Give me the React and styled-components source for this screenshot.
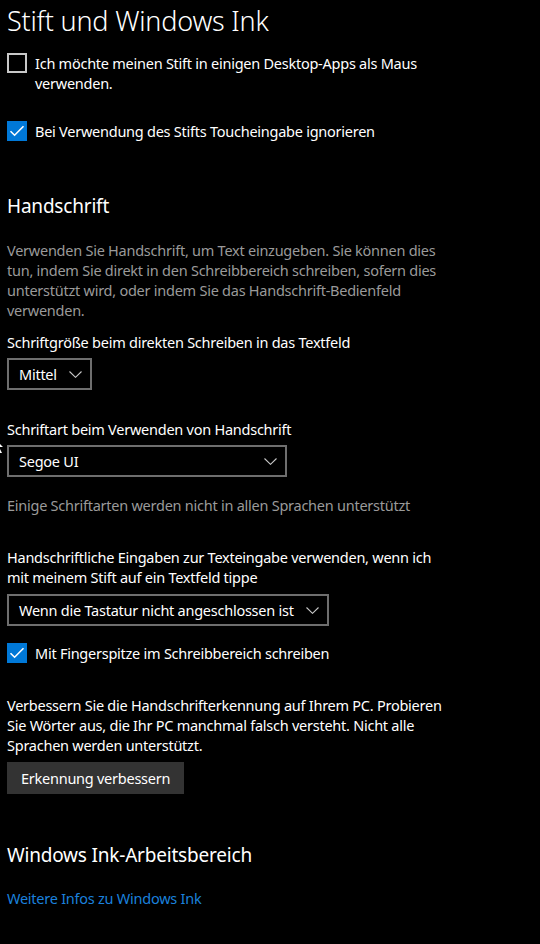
import React from "react";
import styled, { createGlobalStyle } from "styled-components";

const Global = createGlobalStyle`
  html, body { margin: 0; padding: 0; background: #000; }
  body { font-family: "Noto Sans", "Open Sans", sans-serif; color: #fff; }
  * { box-sizing: border-box; }
`;

const Page = styled.div`
  position: relative;
  width: 540px;
  min-height: 944px;
  background: #000;
  padding: 0 0 36px 7px;
  display: flex;
  flex-direction: column;
  align-items: flex-start;
`;

const Title = styled.h1`
  margin: 0;
  margin-top: ${(p) => p.$top}px;
  font-size: 27px;
  line-height: 36px;
  font-weight: 300;
  letter-spacing: -0.2px;
`;

const Heading = styled.h2`
  margin: 0;
  margin-top: ${(p) => p.$top}px;
  font-size: 19px;
  line-height: 28px;
  font-weight: 400;
  letter-spacing: -0.2px;
`;

const Text = styled.p`
  margin: 0;
  margin-top: ${(p) => p.$top}px;
  font-size: 14.5px;
  line-height: 20px;
  color: ${(p) => (p.$muted ? "#9a9a9a" : "#fff")};
  max-width: ${(p) => p.$max || 440}px;
  letter-spacing: -0.25px;
`;

const CheckRow = styled.label`
  display: flex;
  align-items: flex-start;
  gap: 8px;
  margin-top: ${(p) => p.$top}px;
  font-size: 14.5px;
  line-height: 20px;
  letter-spacing: -0.25px;
  max-width: 440px;
`;

const Box = styled.span`
  flex: none;
  width: 20px;
  height: 20px;
  display: flex;
  align-items: center;
  justify-content: center;
  background: ${(p) => (p.$checked ? "#0078d7" : "transparent")};
  border: ${(p) => (p.$checked ? "none" : "2px solid #c8c8c8")};
`;

const Dropdown = styled.div`
  display: flex;
  align-items: center;
  justify-content: space-between;
  gap: 12px;
  margin-top: ${(p) => p.$top}px;
  width: ${(p) => (p.$width ? `${p.$width}px` : "auto")};
  height: 32px;
  padding: 0 8px 0 10px;
  border: 2px solid #6e6e6e;
  font-size: 14.5px;
  letter-spacing: -0.25px;
  color: #fff;
`;

const Button = styled.button`
  margin-top: ${(p) => p.$top}px;
  height: 32px;
  padding: 0 14px;
  background: #333;
  border: none;
  color: #fff;
  font-family: inherit;
  font-size: 14.5px;
  letter-spacing: -0.25px;
`;

const Link = styled.a`
  margin-top: ${(p) => p.$top}px;
  color: #1b80dc;
  font-size: 14.5px;
  line-height: 20px;
  letter-spacing: -0.25px;
  text-decoration: none;
`;

const Cursor = styled.svg`
  position: absolute;
  left: 0;
  top: 444px;
`;

const Check = () => (
  <svg width="16" height="12" viewBox="0 0 16 12">
    <path d="M1.5 6.2 L5.6 10.2 L14.5 1.3" stroke="#fff" strokeWidth="1.6" fill="none" />
  </svg>
);

const Chevron = () => (
  <svg width="13" height="7" viewBox="0 0 13 7">
    <path d="M0.5 0.5 L6.5 6.3 L12.5 0.5" stroke="#c8c8c8" strokeWidth="1.1" fill="none" />
  </svg>
);

export default function App() {
  return (
    <>
      <Global />
      <Page>
        <Title $top={3}>Stift und Windows Ink</Title>
        <CheckRow $top={14}>
          <Box />
          <span>Ich möchte meinen Stift in einigen Desktop-Apps als Maus verwenden.</span>
        </CheckRow>
        <CheckRow $top={28}>
          <Box $checked>
            <Check />
          </Box>
          <span>Bei Verwendung des Stifts Toucheingabe ignorieren</span>
        </CheckRow>
        <Heading $top={51}>Handschrift</Heading>
        <Text $top={20} $muted>
          Verwenden Sie Handschrift, um Text einzugeben. Sie können dies tun, indem Sie direkt in den
          Schreibbereich schreiben, sofern dies unterstützt wird, oder indem Sie das
          Handschrift-Bedienfeld verwenden.
        </Text>
        <Text $top={12}>Schriftgröße beim direkten Schreiben in das Textfeld</Text>
        <Dropdown $top={6}>
          <span>Mittel</span>
          <Chevron />
        </Dropdown>
        <Text $top={29}>Schriftart beim Verwenden von Handschrift</Text>
        <Dropdown $top={6} $width={280}>
          <span>Segoe UI</span>
          <Chevron />
        </Dropdown>
        <Text $top={18} $muted>
          Einige Schriftarten werden nicht in allen Sprachen unterstützt
        </Text>
        <Text $top={32}>
          Handschriftliche Eingaben zur Texteingabe verwenden, wenn ich mit meinem Stift auf ein
          Textfeld tippe
        </Text>
        <Dropdown $top={7}>
          <span>Wenn die Tastatur nicht angeschlossen ist</span>
          <Chevron />
        </Dropdown>
        <CheckRow $top={17}>
          <Box $checked>
            <Check />
          </Box>
          <span>Mit Fingerspitze im Schreibbereich schreiben</span>
        </CheckRow>
        <Text $top={32}>
          Verbessern Sie die Handschrifterkennung auf Ihrem PC. Probieren Sie Wörter aus, die Ihr PC
          manchmal falsch versteht. Nicht alle Sprachen werden unterstützt.
        </Text>
        <Button $top={7}>Erkennung verbessern</Button>
        <Heading $top={47}>Windows Ink-Arbeitsbereich</Heading>
        <Link $top={19} href="#">
          Weitere Infos zu Windows Ink
        </Link>
        <Cursor width="5" height="10" viewBox="0 0 5 10">
          <path d="M0 0 L3 3 L0 3 Z M0 5 L2 9 L0 9 Z" fill="#fff" />
        </Cursor>
      </Page>
    </>
  );
}
